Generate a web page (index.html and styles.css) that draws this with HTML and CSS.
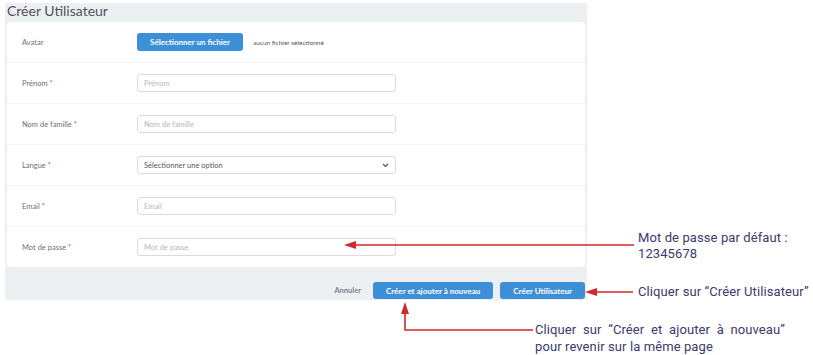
FILE: index.html
```html
<!DOCTYPE html>
<html lang="fr">
<head>
    <meta charset="UTF-8">
    <title>Créer Utilisateur</title>
    <link rel="stylesheet" href="styles.css">
</head>
<body>
    <div class="page">
        <h1 class="title">Créer Utilisateur</h1>

        <form class="card">
            <div class="row">
                <label class="label">Avatar</label>
                <div class="field">
                    <button type="button" class="btn">Sélectionner un fichier</button>
                    <span class="file-name">aucun fichier sélectionné</span>
                </div>
            </div>
            <div class="row">
                <label class="label">Prénom <b>*</b></label>
                <div class="field"><input class="input" placeholder="Prénom"></div>
            </div>
            <div class="row">
                <label class="label">Nom de famille <b>*</b></label>
                <div class="field"><input class="input" placeholder="Nom de famille"></div>
            </div>
            <div class="row">
                <label class="label">Langue <b>*</b></label>
                <div class="field">
                    <div class="input select">
                        <span>Sélectionner une option</span>
                        <svg width="7" height="5" viewBox="0 0 7 5"><path d="M1 1l2.5 2.5L6 1" fill="none" stroke="#555" stroke-width="1.2"/></svg>
                    </div>
                </div>
            </div>
            <div class="row">
                <label class="label">Email <b>*</b></label>
                <div class="field"><input class="input" placeholder="Email"></div>
            </div>
            <div class="row">
                <label class="label">Mot de passe <b>*</b></label>
                <div class="field"><input class="input" placeholder="Mot de passe"></div>
            </div>
        </form>

        <div class="actions">
            <a href="#" class="cancel">Annuler</a>
            <button type="button" class="btn">Créer et ajouter à nouveau</button>
            <button type="button" class="btn">Créer Utilisateur</button>
        </div>
    </div>

    <!-- annotations -->
    <svg class="arrows" width="813" height="355" viewBox="0 0 813 355">
        <g stroke="#d0282d" stroke-width="1.6" fill="none">
            <path d="M634 245H352"/>
            <path d="M633 292H593"/>
            <path d="M533 330H405V310"/>
        </g>
        <g fill="#d0282d">
            <path d="M344 245l12 -4v8z"/>
            <path d="M585 292l12 -4v8z"/>
            <path d="M405 302l-4 12h8z"/>
        </g>
    </svg>
    <p class="note note-pass">Mot de passe par défaut :<br>12345678</p>
    <p class="note note-create">Cliquer sur “Créer Utilisateur”</p>
    <p class="note note-again">Cliquer&nbsp; sur&nbsp; “Créer&nbsp; et&nbsp; ajouter&nbsp; à&nbsp; nouveau”<br>pour revenir sur la même page</p>
</body>
</html>
```

FILE: styles.css
```css
/* reset */
* {
    margin: 0;
    padding: 0;
    box-sizing: border-box;
}

body {
    background: #ffffff;
    font-family: Lato, 'Open Sans', sans-serif;
    position: relative;
    width: 813px;
    height: 355px;
    overflow: hidden;
}

/* gray panel */
.page {
    margin: 3px 0 0 5px;
    width: 582px;
    height: 297px;
    background: #edf0f3;
}

.title {
    font-size: 14px;
    font-weight: 400;
    color: #4e5157;
    line-height: 14px;
    padding: 1px 0 0 2px;
    height: 19px;
}

/* form card */
.card {
    margin: 0 2px;
    background: #ffffff;
    border-radius: 4px;
}

.row {
    display: flex;
    align-items: center;
    height: 41px;
    padding-left: 15px;
    border-bottom: 1px solid #f3f4f6;
}

.row:last-child {
    border-bottom: none;
    height: 40px;
}

.label {
    width: 115px;
    font-size: 7.5px;
    color: #6b6f76;
}

.label b {
    color: #e0565b;
    font-weight: 400;
}

.field {
    display: flex;
    align-items: center;
}

.input {
    width: 259px;
    height: 18px;
    border: 1px solid #d9dde3;
    border-radius: 3px;
    padding: 0 6px;
    font-family: inherit;
    font-size: 7.5px;
    color: #555;
    background: #fff;
    outline: none;
}

.input::placeholder {
    color: #b3b7bd;
}

.select {
    display: flex;
    align-items: center;
    justify-content: space-between;
    color: #55585e;
}

/* blue buttons */
.btn {
    height: 18px;
    padding: 0 13px;
    border: none;
    border-radius: 3px;
    background: #3d8fd8;
    color: #ffffff;
    font-family: inherit;
    font-size: 8px;
    font-weight: 700;
}

.file-name {
    margin-left: 10px;
    font-size: 6.5px;
    color: #555;
}

/* footer actions */
.actions {
    display: flex;
    justify-content: flex-end;
    align-items: center;
    gap: 7px;
    padding: 15px 2px 0 0;
}

.actions .btn {
    height: 17px;
}

.cancel {
    font-size: 7.5px;
    font-weight: 700;
    color: #7a7e85;
    text-decoration: none;
    margin-right: 5px;
}

/* annotation layer */
.arrows {
    position: absolute;
    left: 0;
    top: 0;
}

.note {
    position: absolute;
    font-family: Roboto, 'Noto Sans', sans-serif;
    font-size: 13px;
    letter-spacing: 0.1px;
    line-height: 16px;
    color: #3b3a6b;
    white-space: nowrap;
}

.note-pass {
    left: 638px;
    top: 230px;
}

.note-create {
    left: 638px;
    top: 284px;
}

.note-again {
    left: 535px;
    top: 321px;
    line-height: 17px;
}
```
